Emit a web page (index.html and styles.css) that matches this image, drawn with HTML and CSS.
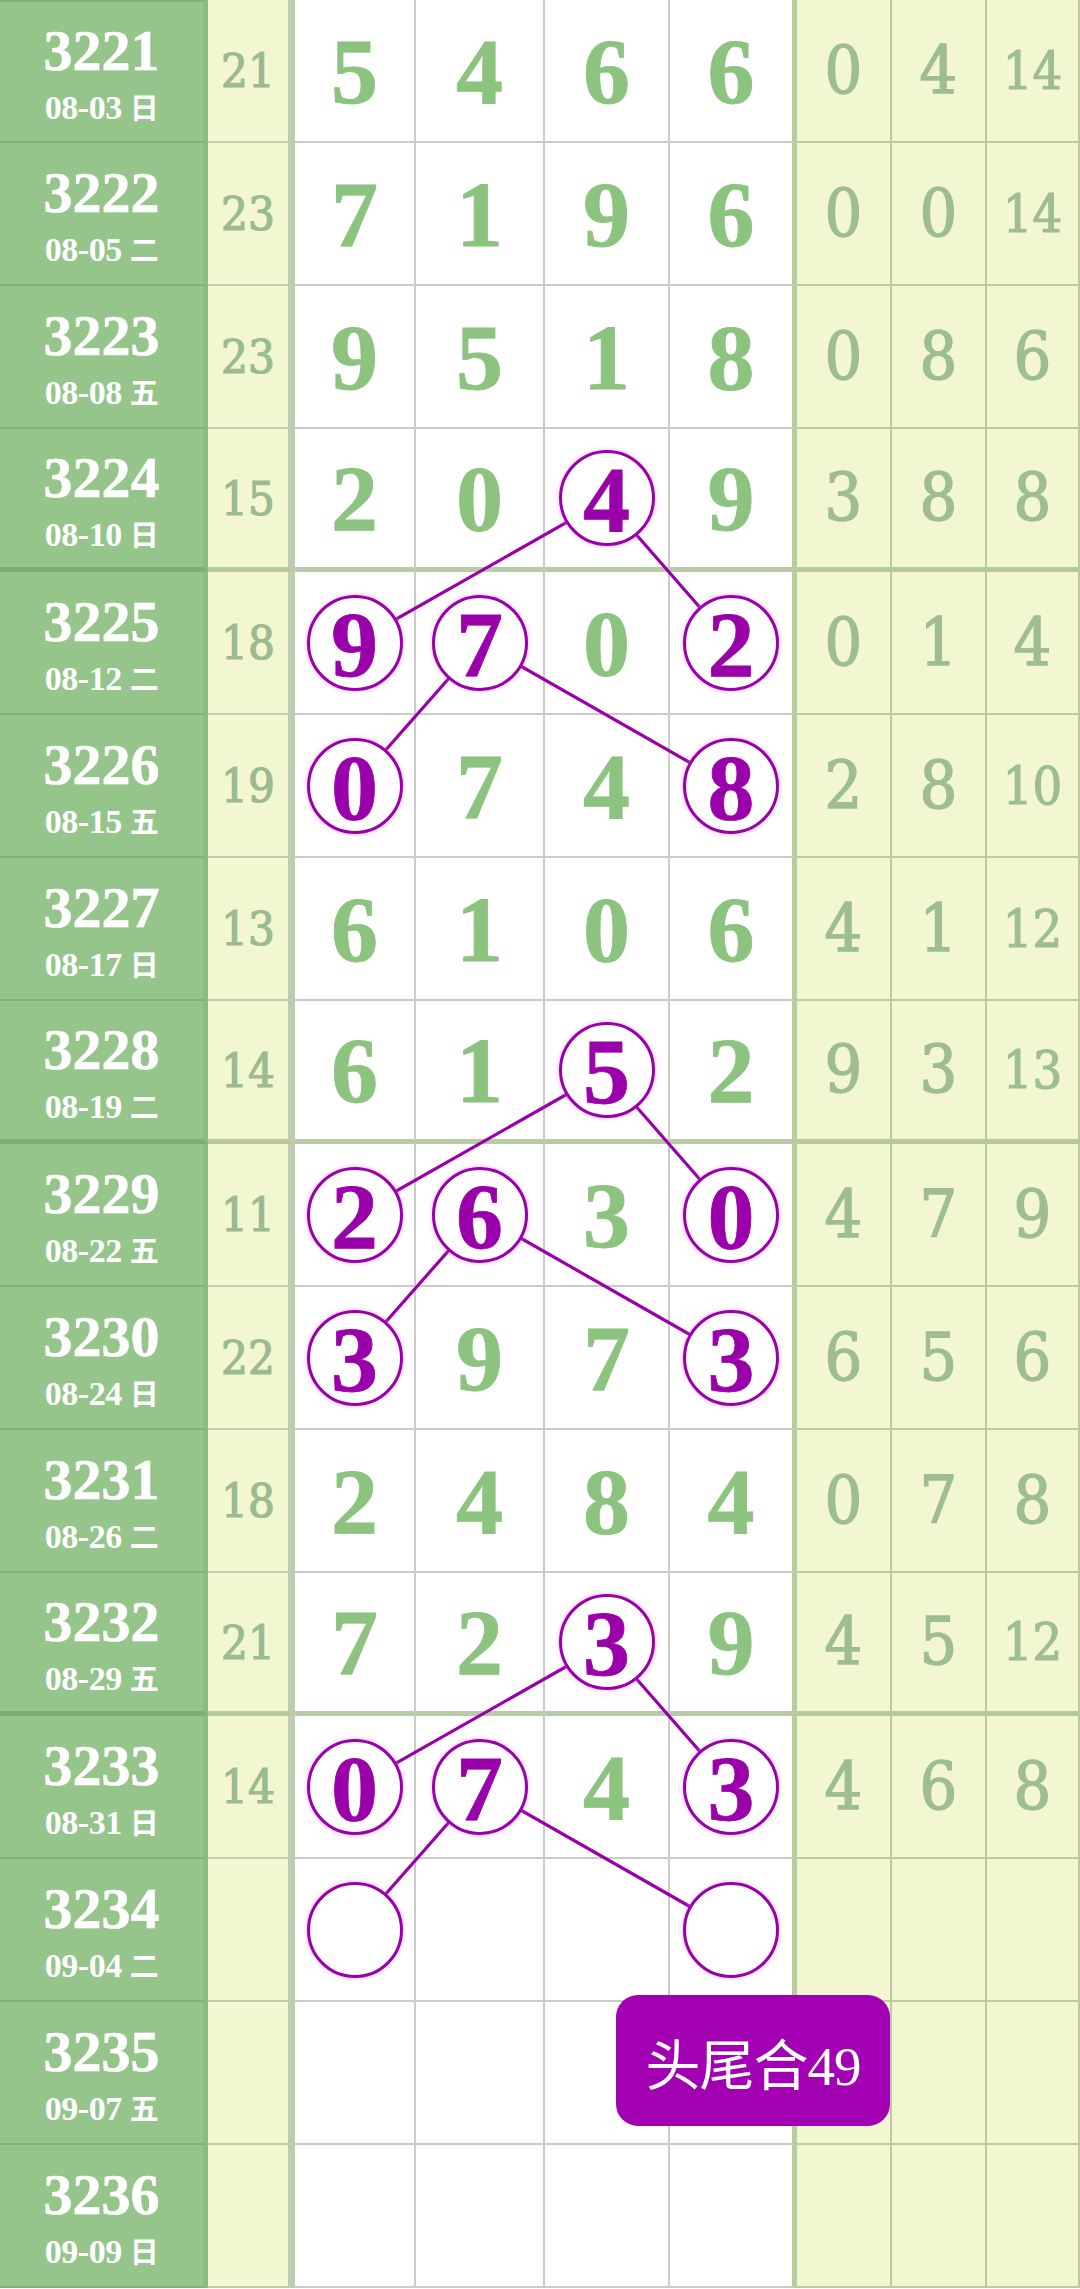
FILE: index.html
```html
<!DOCTYPE html>
<html lang="zh">
<head>
<meta charset="utf-8">
<title>走势图</title>
<link rel="stylesheet" href="styles.css">
</head>
<body>
<div class="chart">
  <div class="row">
    <div class="issue"><span class="no">3221</span><span class="date">08-03 <b>日</b></span></div>
    <div class="sum">21</div>
    <div class="d w1">5</div><div class="d w2">4</div><div class="d w3">6</div><div class="d w4">6</div>
    <div class="r">0</div><div class="r">4</div><div class="r two">14</div>
  </div>
  <div class="row">
    <div class="issue"><span class="no">3222</span><span class="date">08-05 <b>二</b></span></div>
    <div class="sum">23</div>
    <div class="d w1">7</div><div class="d w2">1</div><div class="d w3">9</div><div class="d w4">6</div>
    <div class="r">0</div><div class="r">0</div><div class="r two">14</div>
  </div>
  <div class="row">
    <div class="issue"><span class="no">3223</span><span class="date">08-08 <b>五</b></span></div>
    <div class="sum">23</div>
    <div class="d w1">9</div><div class="d w2">5</div><div class="d w3">1</div><div class="d w4">8</div>
    <div class="r">0</div><div class="r">8</div><div class="r">6</div>
  </div>
  <div class="row thick">
    <div class="issue"><span class="no">3224</span><span class="date">08-10 <b>日</b></span></div>
    <div class="sum">15</div>
    <div class="d w1">2</div><div class="d w2">0</div><div class="d w3"><span class="hit">4</span></div><div class="d w4">9</div>
    <div class="r">3</div><div class="r">8</div><div class="r">8</div>
  </div>
  <div class="row">
    <div class="issue"><span class="no">3225</span><span class="date">08-12 <b>二</b></span></div>
    <div class="sum">18</div>
    <div class="d w1"><span class="hit">9</span></div><div class="d w2"><span class="hit">7</span></div><div class="d w3">0</div><div class="d w4"><span class="hit">2</span></div>
    <div class="r">0</div><div class="r">1</div><div class="r">4</div>
  </div>
  <div class="row">
    <div class="issue"><span class="no">3226</span><span class="date">08-15 <b>五</b></span></div>
    <div class="sum">19</div>
    <div class="d w1"><span class="hit">0</span></div><div class="d w2">7</div><div class="d w3">4</div><div class="d w4"><span class="hit">8</span></div>
    <div class="r">2</div><div class="r">8</div><div class="r two">10</div>
  </div>
  <div class="row">
    <div class="issue"><span class="no">3227</span><span class="date">08-17 <b>日</b></span></div>
    <div class="sum">13</div>
    <div class="d w1">6</div><div class="d w2">1</div><div class="d w3">0</div><div class="d w4">6</div>
    <div class="r">4</div><div class="r">1</div><div class="r two">12</div>
  </div>
  <div class="row thick">
    <div class="issue"><span class="no">3228</span><span class="date">08-19 <b>二</b></span></div>
    <div class="sum">14</div>
    <div class="d w1">6</div><div class="d w2">1</div><div class="d w3"><span class="hit">5</span></div><div class="d w4">2</div>
    <div class="r">9</div><div class="r">3</div><div class="r two">13</div>
  </div>
  <div class="row">
    <div class="issue"><span class="no">3229</span><span class="date">08-22 <b>五</b></span></div>
    <div class="sum">11</div>
    <div class="d w1"><span class="hit">2</span></div><div class="d w2"><span class="hit">6</span></div><div class="d w3">3</div><div class="d w4"><span class="hit">0</span></div>
    <div class="r">4</div><div class="r">7</div><div class="r">9</div>
  </div>
  <div class="row">
    <div class="issue"><span class="no">3230</span><span class="date">08-24 <b>日</b></span></div>
    <div class="sum">22</div>
    <div class="d w1"><span class="hit">3</span></div><div class="d w2">9</div><div class="d w3">7</div><div class="d w4"><span class="hit">3</span></div>
    <div class="r">6</div><div class="r">5</div><div class="r">6</div>
  </div>
  <div class="row">
    <div class="issue"><span class="no">3231</span><span class="date">08-26 <b>二</b></span></div>
    <div class="sum">18</div>
    <div class="d w1">2</div><div class="d w2">4</div><div class="d w3">8</div><div class="d w4">4</div>
    <div class="r">0</div><div class="r">7</div><div class="r">8</div>
  </div>
  <div class="row thick">
    <div class="issue"><span class="no">3232</span><span class="date">08-29 <b>五</b></span></div>
    <div class="sum">21</div>
    <div class="d w1">7</div><div class="d w2">2</div><div class="d w3"><span class="hit">3</span></div><div class="d w4">9</div>
    <div class="r">4</div><div class="r">5</div><div class="r two">12</div>
  </div>
  <div class="row">
    <div class="issue"><span class="no">3233</span><span class="date">08-31 <b>日</b></span></div>
    <div class="sum">14</div>
    <div class="d w1"><span class="hit">0</span></div><div class="d w2"><span class="hit">7</span></div><div class="d w3">4</div><div class="d w4"><span class="hit">3</span></div>
    <div class="r">4</div><div class="r">6</div><div class="r">8</div>
  </div>
  <div class="row">
    <div class="issue"><span class="no">3234</span><span class="date">09-04 <b>二</b></span></div>
    <div class="sum"></div>
    <div class="d w1"><span class="hit"></span></div><div class="d w2"></div><div class="d w3"></div><div class="d w4"><span class="hit"></span></div>
    <div class="r"></div><div class="r"></div><div class="r"></div>
  </div>
  <div class="row">
    <div class="issue"><span class="no">3235</span><span class="date">09-07 <b>五</b></span></div>
    <div class="sum"></div>
    <div class="d w1"></div><div class="d w2"></div><div class="d w3"></div><div class="d w4"></div>
    <div class="r"></div><div class="r"></div><div class="r"></div>
  </div>
  <div class="row">
    <div class="issue"><span class="no">3236</span><span class="date">09-09 <b>日</b></span></div>
    <div class="sum"></div>
    <div class="d w1"></div><div class="d w2"></div><div class="d w3"></div><div class="d w4"></div>
    <div class="r"></div><div class="r"></div><div class="r"></div>
  </div>

  <svg class="links" width="1080" height="2289" viewBox="0 0 1080 2289">
    <g stroke="#9a00aa" stroke-width="3.2" fill="none" stroke-linecap="round">
      <line x1="606" y1="500" x2="354" y2="643"/>
      <line x1="606" y1="500" x2="731" y2="643"/>
      <line x1="480" y1="643" x2="354" y2="786"/>
      <line x1="480" y1="643" x2="731" y2="786"/>
      <line x1="606" y1="1072" x2="354" y2="1215"/>
      <line x1="606" y1="1072" x2="731" y2="1215"/>
      <line x1="480" y1="1215" x2="354" y2="1358"/>
      <line x1="480" y1="1215" x2="731" y2="1358"/>
      <line x1="606" y1="1644" x2="354" y2="1787"/>
      <line x1="606" y1="1644" x2="731" y2="1787"/>
      <line x1="480" y1="1787" x2="354" y2="1930"/>
      <line x1="480" y1="1787" x2="731" y2="1930"/>
    </g>
  </svg>

  <div class="badge">头尾合49</div>
</div>
</body>
</html>
```
FILE: styles.css
```css
* { box-sizing: border-box; }

html, body {
  margin: 0;
  padding: 0;
  background: #ffffff;
}

.chart {
  position: relative;
  width: 1080px;
  font-family: "Liberation Serif", "Noto Sans CJK SC", serif;
}

.row {
  display: grid;
  grid-template-columns: 208px 87px 121px 129px 125px 127px 95px 95px 93px;
  height: 143px;
}

.row > div {
  border-bottom: 2px solid #cacaca;
  display: flex;
  align-items: center;
  justify-content: center;
}

/* issue column */
.row > .issue {
  background: #95c58b;
  border-right: 5px solid #8cba82;
  border-bottom-color: #84b078;
  flex-direction: column;
  gap: 11px;
  color: #ffffff;
  padding-top: 4px;
}
.row:first-child > .issue {
  border-top: 2px solid #84b078;
}

.no {
  font-size: 58px;
  font-weight: bold;
  line-height: 1;
  -webkit-text-stroke: 0.6px #ffffff;
}

.date {
  font-size: 34px;
  font-weight: bold;
  line-height: 1;
  letter-spacing: -0.5px;
}
.date b {
  font-family: "Noto Sans CJK SC", sans-serif;
  font-size: 29px;
  font-weight: 700;
}

/* sum column */
.row > .sum {
  background: #f2f7d1;
  border-right: 7px solid #bfccb0;
  border-bottom-color: #c2cda8;
  color: #9cba91;
  font-family: "DejaVu Serif Condensed", "DejaVu Serif", serif;
  font-stretch: condensed;
  font-size: 47px;
  line-height: 1;
  -webkit-text-stroke: 1.2px #9cba91;
}

/* digit columns */
.row > .d {
  background: #ffffff;
  border-right: 2px solid #cbcbcb;
  color: #8bc37f;
  font-size: 94px;
  font-weight: bold;
  line-height: 1;
  -webkit-text-stroke: 0.8px #8bc37f;
}
.row > .d.w4 {
  border-right: 5px solid #b7cd9b;
}

.hit {
  position: relative;
  z-index: 2;
  width: 96px;
  height: 96px;
  border: 3.5px solid #9a00aa;
  border-radius: 50%;
  background: #ffffff;
  color: #9a00aa;
  -webkit-text-stroke: 0.8px #9a00aa;
  display: flex;
  align-items: center;
  justify-content: center;
  box-shadow: 0 0 5px rgba(220, 120, 235, 0.55);
  padding-top: 2px;
}

/* right yellow columns */
.row > .r {
  background: #f2f7d1;
  border-right: 2px solid #bcc89f;
  border-bottom-color: #bfcaa3;
  color: #9ebd95;
  font-family: "DejaVu Serif Condensed", "DejaVu Serif", serif;
  font-stretch: condensed;
  font-size: 66px;
  line-height: 1;
  -webkit-text-stroke: 1.4px #9ebd95;
}
.row > .r.two {
  font-size: 52px;
  -webkit-text-stroke: 1.2px #9ebd95;
}

/* thick group separators */
.row.thick > div {
  border-bottom-width: 5px;
  border-bottom-color: #b8caa7;
}
.row.thick > .issue {
  border-bottom-color: #80ad74;
}
.row.thick > .r,
.row.thick > .sum {
  border-bottom-color: #b6c99c;
}

.links {
  position: absolute;
  left: 0;
  top: 0;
  z-index: 1;
  pointer-events: none;
}

.badge {
  position: absolute;
  left: 616px;
  top: 1995px;
  width: 274px;
  height: 131px;
  z-index: 3;
  border-radius: 22px;
  background: #a100b3;
  color: #ffffff;
  font-size: 55px;
  font-family: "Liberation Serif", "Noto Sans CJK SC", serif;
  display: flex;
  align-items: center;
  justify-content: center;
  letter-spacing: -1px;
}
```
